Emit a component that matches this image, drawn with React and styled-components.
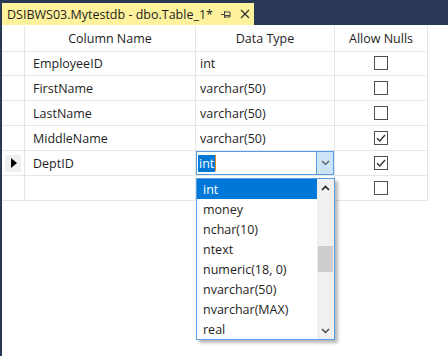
import React from "react";
import styled, { createGlobalStyle } from "styled-components";

const Global = createGlobalStyle`
  html, body { margin: 0; padding: 0; background: #ffffff; }
  body { font-family: "Open Sans", "Noto Sans", sans-serif; color: #1e1e1e; }
`;

const Frame = styled.div`
  position: relative;
  width: 446px;
  height: 356px;
  border-left: 2px solid #293955;
  background: #ffffff;
  overflow: hidden;
`;

const TitleBar = styled.div`
  height: 25px;
  background: #293955;
  display: flex;
  align-items: flex-end;
`;

const Tab = styled.div`
  width: 252px;
  height: 22px;
  box-sizing: border-box;
  background: #fff29d;
  display: flex;
  align-items: center;
  padding: 0 4px 0 5px;
  font-size: 12.5px;
  color: #1e1e1e;
`;

const TabTitle = styled.span`
  flex: 1;
  white-space: nowrap;
`;

const TabIcon = styled.svg`
  width: ${(p) => p.$w}px;
  height: ${(p) => p.$h}px;
  margin-left: ${(p) => p.$ml}px;
  flex: none;
`;

const Grid = styled.div`
  margin-top: 1px;
  display: grid;
  grid-template-columns: 23px 171px 139px 93px;
  grid-auto-rows: 25px;
  width: 426px;
`;

const Cell = styled.div`
  box-sizing: border-box;
  border-right: 1px solid #e6e6e6;
  border-bottom: 1px solid #e6e6e6;
  display: flex;
  align-items: center;
  justify-content: ${(p) => (p.$center ? "center" : "flex-start")};
  padding-left: ${(p) => p.$pad || 0}px;
  font-size: 12.5px;
  color: #1e1e1e;
  white-space: nowrap;
  position: relative;
`;

const HeadCell = styled(Cell)`
  height: 26px;
  justify-content: center;
`;

const SelectorMark = styled.div`
  width: 16px;
  height: 17px;
  margin-left: 3px;
  background: #f0f0f0;
  display: flex;
  align-items: center;
  justify-content: center;
`;

const Arrow = styled.div`
  width: 0;
  height: 0;
  border-top: 5px solid transparent;
  border-bottom: 5px solid transparent;
  border-left: 6px solid #000;
  margin-left: 1px;
`;

const Box = styled.div`
  width: 14px;
  height: 14px;
  box-sizing: border-box;
  border: 1.5px solid #505050;
  display: flex;
  align-items: center;
  justify-content: center;
`;

const Combo = styled.div`
  position: absolute;
  inset: 0 0 0 0;
  border: 1px solid #569de5;
  background: #fff;
  display: flex;
  align-items: stretch;
`;

const ComboText = styled.div`
  flex: 1;
  display: flex;
  align-items: center;
  padding-left: 1px;
`;

const Selected = styled.span`
  background: #0078d7;
  color: #fff;
  padding: 0 1px;
  line-height: 17px;
`;

const Caret = styled.span`
  width: 1px;
  height: 16px;
  background: #e08a2a;
`;

const ComboButton = styled.div`
  width: 16px;
  background: #cce4f7;
  border-left: 1px solid #569de5;
  display: flex;
  align-items: center;
  justify-content: center;
`;

const List = styled.div`
  position: absolute;
  left: 194px;
  top: 178px;
  width: 139px;
  height: 162px;
  box-sizing: border-box;
  border: 1px solid #569de5;
  background: #fff;
  box-shadow: 3px 3px 3px rgba(0, 0, 0, 0.28);
  display: flex;
`;

const Items = styled.div`
  flex: 1;
  display: flex;
  flex-direction: column;
`;

const Item = styled.div`
  height: 20px;
  display: flex;
  align-items: center;
  padding-left: 6px;
  font-size: 12.5px;
  color: ${(p) => (p.$active ? "#ffffff" : "#1e1e1e")};
  background: ${(p) => (p.$active ? "#0078d7" : "transparent")};
`;

const ScrollBar = styled.div`
  width: 17px;
  background: #f0f0f0;
  display: flex;
  flex-direction: column;
  align-items: center;
`;

const ScrollBtn = styled.div`
  height: 17px;
  width: 17px;
  display: flex;
  align-items: center;
  justify-content: center;
`;

const Track = styled.div`
  flex: 1;
  width: 100%;
  display: flex;
  flex-direction: column;
  align-items: center;
`;

const Thumb = styled.div`
  margin-top: ${(p) => p.$top}px;
  width: 15px;
  height: 26px;
  background: #cdcdcd;
`;

const Check = () => (
  <svg width="10" height="10" viewBox="0 0 10 10">
    <path d="M1 5.2 L3.8 8 L9 2" fill="none" stroke="#333" strokeWidth="1.4" />
  </svg>
);

const Chevron = ({ up, color = "#555", sw = 1.2 }) => (
  <svg width="9" height="6" viewBox="0 0 9 6">
    <path
      d={up ? "M1 5 L4.5 1.5 L8 5" : "M1 1 L4.5 4.5 L8 1"}
      fill="none"
      stroke={color}
      strokeWidth={sw}
    />
  </svg>
);

const rows = [
  { name: "EmployeeID", type: "int", nulls: false },
  { name: "FirstName", type: "varchar(50)", nulls: false },
  { name: "LastName", type: "varchar(50)", nulls: false },
  { name: "MiddleName", type: "varchar(50)", nulls: true },
  { name: "DeptID", type: "int", nulls: true, current: true },
  { name: "", type: "", nulls: false },
];

const options = [
  "int",
  "money",
  "nchar(10)",
  "ntext",
  "numeric(18, 0)",
  "nvarchar(50)",
  "nvarchar(MAX)",
  "real",
];

export default function App() {
  return (
    <>
      <Global />
      <Frame>
        <TitleBar>
          <Tab>
            <TabTitle>DSIBWS03.Mytestdb - dbo.Table_1*</TabTitle>
            <TabIcon $w={10} $h={10} $ml={0} viewBox="0 0 10 10">
              <path d="M0 5.5 H3 M3.5 2 V9 M3.5 3 H9 V8 H3.5 M3.5 6.5 H9" fill="none" stroke="#444" strokeWidth="1" />
            </TabIcon>
            <TabIcon $w={10} $h={10} $ml={9} viewBox="0 0 10 10">
              <path d="M1 1 L9 9 M9 1 L1 9" stroke="#333" strokeWidth="1.3" />
            </TabIcon>
          </Tab>
        </TitleBar>
        <Grid>
          <HeadCell />
          <HeadCell>Column Name</HeadCell>
          <HeadCell>Data Type</HeadCell>
          <HeadCell>Allow Nulls</HeadCell>
          {rows.map((r, i) => (
            <React.Fragment key={i}>
              <Cell>
                {r.current && (
                  <SelectorMark>
                    <Arrow />
                  </SelectorMark>
                )}
              </Cell>
              <Cell $pad={8}>{r.name}</Cell>
              <Cell $pad={4}>
                {r.current ? (
                  <Combo>
                    <ComboText>
                      <Selected>int</Selected>
                      <Caret />
                    </ComboText>
                    <ComboButton>
                      <Chevron color="#555" />
                    </ComboButton>
                  </Combo>
                ) : (
                  r.type
                )}
              </Cell>
              <Cell $center>
                <Box>{r.nulls && <Check />}</Box>
              </Cell>
            </React.Fragment>
          ))}
        </Grid>
        <List>
          <Items>
            {options.map((o, i) => (
              <Item key={o} $active={i === 0}>
                {o}
              </Item>
            ))}
          </Items>
          <ScrollBar>
            <ScrollBtn>
              <Chevron up color="#222" sw={1.6} />
            </ScrollBtn>
            <Track>
              <Thumb $top={50} />
            </Track>
            <ScrollBtn>
              <Chevron color="#444" sw={1.4} />
            </ScrollBtn>
          </ScrollBar>
        </List>
      </Frame>
    </>
  );
}
